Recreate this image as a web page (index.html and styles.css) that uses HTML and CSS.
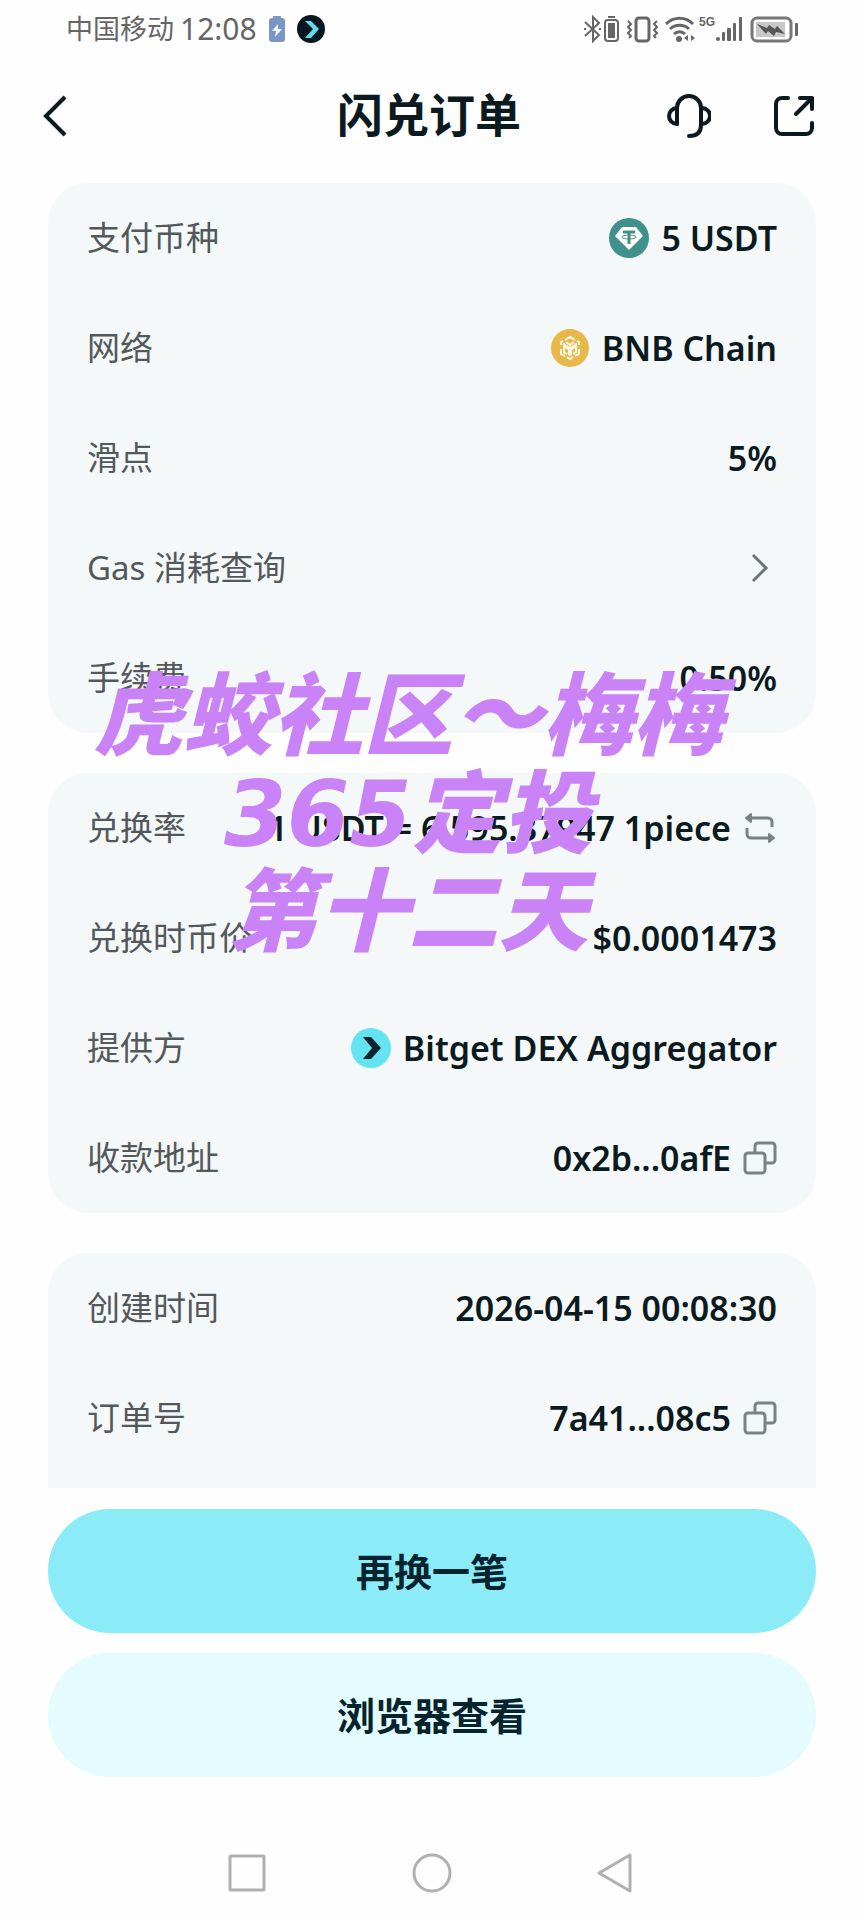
FILE: index.html
```html
<!DOCTYPE html>
<html lang="zh-CN">

<head>
    <meta charset="UTF-8">
    <meta name="viewport" content="width=device-width, initial-scale=1.0">
    <title>闪兑订单</title>
    <link rel="stylesheet" href="styles.css">
</head>

<body>
    <!-- 状态栏 -->
    <div class="status">
        <div class="status-left">
            <span class="carrier">中国移动</span>
            <span class="time">12:08</span>
            <svg class="charge" width="16" height="26" viewBox="0 0 16 26">
                <rect x="4" y="0" width="8" height="3" rx="1" fill="#7b95c4"/>
                <rect x="0" y="2" width="16" height="24" rx="3" fill="#7b95c4"/>
                <path d="M9 8L3 15h4l-1 6 7-8H9z" fill="#fff"/>
            </svg>
            <svg width="28" height="28" viewBox="0 0 28 28">
                <circle cx="14" cy="14" r="14" fill="#07161f"/>
                <path d="M8 6h6l8 8-8 9H8l8-9z" fill="#5fdcee"/>
            </svg>
        </div>
        <div class="status-right">
            <svg width="36" height="28" viewBox="0 0 36 28" fill="none" stroke="#666" stroke-width="2">
                <path d="M1 7l14 13-6 6V2l6 6L1 21M0 14h2M15 14h2"/>
                <rect x="21" y="5" width="13" height="21" rx="3"/>
                <path d="M24 2h7"/>
                <rect x="24" y="8" width="7" height="15" fill="#666" stroke="none"/>
            </svg>
            <svg class="vibrate" width="31" height="28" viewBox="0 0 31 28" fill="none" stroke="#666" stroke-width="3">
                <rect x="9" y="3" width="13" height="23" rx="3"/>
                <path d="M1 6l3 3-3 3 3 3-3 3 3 3-2 2M30 6l-3 3 3 3-3 3 3 3-3 3 2 2" stroke-width="2"/>
            </svg>
            <svg class="wifi" width="31" height="28" viewBox="0 0 31 28" fill="none" stroke="#666" stroke-width="3">
                <path d="M1 9a19 19 0 0 1 27 0M5 14a14 14 0 0 1 19 0M9 19a8 8 0 0 1 11 0"/>
                <circle cx="14" cy="24" r="3" fill="#666" stroke="none"/>
                <path d="M23 20v6l-4-3zM26 20v6l4-3z" fill="#666" stroke="none"/>
            </svg>
            <span class="net">5G</span>
            <svg width="28" height="28" viewBox="0 0 28 28" fill="#666">
                <rect x="1" y="22" width="4" height="4" rx="2"/>
                <rect x="7" y="17" width="3" height="9" rx="1"/>
                <rect x="12" y="13" width="4" height="13" rx="1"/>
                <rect x="18" y="8" width="3" height="18" rx="1"/>
                <rect x="24" y="2" width="3" height="24" rx="1"/>
            </svg>
            <svg class="battery" width="49" height="28" viewBox="0 0 49 28">
                <rect x="2" y="3" width="39" height="23" rx="5" fill="none" stroke="#777" stroke-width="3"/>
                <rect x="6" y="7" width="29" height="15" fill="#c8c8c8"/>
                <path d="M7 9l10 4 2-3 6 4 2-3 8 8-9-2-2 4-6-5-2 3z" fill="#555"/>
                <rect x="45" y="8" width="3" height="13" rx="1" fill="#666"/>
            </svg>
        </div>
    </div>

    <!-- 标题栏 -->
    <header class="header">
        <button class="icon-btn back" aria-label="返回">
            <svg width="24" height="42" viewBox="0 0 24 42" fill="none" stroke="#0b1a1e" stroke-width="4">
                <path d="M22 2L3 21l19 19"/>
            </svg>
        </button>
        <h1>闪兑订单</h1>
        <div class="tools">
            <button class="icon-btn" aria-label="客服">
                <svg width="44" height="44" viewBox="0 0 44 44" fill="none" stroke="#0b1a1e" stroke-width="4" stroke-linecap="round">
                    <path d="M10 30V14a12 12 0 0 1 24 0v17c0 7-4 11-12 11"/>
                    <path d="M10 14a8 8 0 0 0 0 16M35 14a8 8 0 0 1 0 16"/>
                </svg>
            </button>
            <button class="icon-btn" aria-label="分享">
                <svg width="42" height="42" viewBox="0 0 42 42" fill="none" stroke="#0b1a1e" stroke-width="4" stroke-linecap="round" stroke-linejoin="round">
                    <path d="M15 3H9a6 6 0 0 0-6 6v24a6 6 0 0 0 6 6h24a6 6 0 0 0 6-6v-5"/>
                    <path d="M27 3h12v11M39 3L23 19"/>
                </svg>
            </button>
        </div>
    </header>

    <main class="content">
        <section class="card">
            <div class="row">
                <span class="label">支付币种</span>
                <span class="value">
                    <svg width="40" height="40" viewBox="0 0 40 40">
                        <circle cx="20" cy="20" r="20" fill="#40918b"/>
                        <path d="M13 9h14l7 9-14 14L6 18z" fill="#fff"/>
                        <path d="M14 14h12M20 14v12" stroke="#40918b" stroke-width="3"/>
                        <ellipse cx="20" cy="19" rx="7" ry="2" fill="none" stroke="#40918b"/>
                    </svg>
                    5 USDT
                </span>
            </div>
            <div class="row">
                <span class="label">网络</span>
                <span class="value">
                    <svg width="40" height="40" viewBox="0 0 40 40">
                        <circle cx="20" cy="20" r="19" fill="#e8b84b"/>
                        <g fill="none" stroke="#fff8e4" stroke-width="2">
                            <path d="M15 12l5-3 5 3M11 17v-3l2-1M29 17v-3l-2-1M11 21v5l4 2M29 21v5l-4 2M17 29l3 2 3-2"/>
                            <path d="M14 15v9l3 2M26 15v9l-3 2M16 14l4 3 4-3"/>
                        </g>
                        <path d="M15 16l5 3 5-3v4l-3 2v5l-2 1-2-1v-5l-3-2z" fill="#fff8e4"/>
                    </svg>
                    BNB Chain
                </span>
            </div>
            <div class="row">
                <span class="label">滑点</span>
                <span class="value">5%</span>
            </div>
            <a class="row" href="#">
                <span class="label">Gas 消耗查询</span>
                <svg class="arrow" width="18" height="30" viewBox="0 0 18 30" fill="none" stroke="#6b7375" stroke-width="3">
                    <path d="M2 2l13 13L2 28"/>
                </svg>
            </a>
            <div class="row">
                <span class="label">手续费</span>
                <span class="value">0.50%</span>
            </div>
        </section>

        <section class="card">
            <div class="row">
                <span class="label">兑换率</span>
                <span class="value">
                    1 USDT = 6,595.37947 1piece
                    <button class="icon-btn" aria-label="切换">
                        <svg width="34" height="34" viewBox="0 0 34 34" fill="none" stroke="#7b8283" stroke-width="3" stroke-linejoin="round">
                            <path d="M5 7h20a4 4 0 0 1 4 4v5M4 17v6a4 4 0 0 0 4 4h20"/>
                            <path d="M8 3L3 7l5 4zM26 23l5 4-5 4z" fill="#7b8283" stroke-width="2"/>
                        </svg>
                    </button>
                </span>
            </div>
            <div class="row">
                <span class="label">兑换时币价</span>
                <span class="value">$0.0001473</span>
            </div>
            <div class="row">
                <span class="label">提供方</span>
                <span class="value">
                    <svg width="40" height="40" viewBox="0 0 40 40">
                        <circle cx="20" cy="20" r="20" fill="#66e3f0"/>
                        <path d="M12 9h8l10 11-10 11h-8l9-11z" fill="#0b2430"/>
                    </svg>
                    Bitget DEX Aggregator
                </span>
            </div>
            <div class="row">
                <span class="label">收款地址</span>
                <span class="value">
                    0x2b...0afE
                    <button class="icon-btn" aria-label="复制收款地址">
                        <svg width="34" height="34" viewBox="0 0 34 34" fill="none" stroke="#7b8283" stroke-width="3">
                            <rect x="2" y="12" width="20" height="20" rx="3"/>
                            <path d="M12 12V5a3 3 0 0 1 3-3h14a3 3 0 0 1 3 3v14a3 3 0 0 1-3 3h-7"/>
                        </svg>
                    </button>
                </span>
            </div>
        </section>

        <section class="card card-last">
            <div class="row">
                <span class="label">创建时间</span>
                <span class="value">2026-04-15 00:08:30</span>
            </div>
            <div class="row">
                <span class="label">订单号</span>
                <span class="value">
                    7a41...08c5
                    <button class="icon-btn" aria-label="复制订单号">
                        <svg width="34" height="34" viewBox="0 0 34 34" fill="none" stroke="#7b8283" stroke-width="3">
                            <rect x="2" y="12" width="20" height="20" rx="3"/>
                            <path d="M12 12V5a3 3 0 0 1 3-3h14a3 3 0 0 1 3 3v14a3 3 0 0 1-3 3h-7"/>
                        </svg>
                    </button>
                </span>
            </div>
        </section>

        <!-- 水印 -->
        <div class="watermark">虎蛟社区～梅梅<br>365定投<br>第十二天</div>
    </main>

    <div class="actions">
        <button class="btn btn-primary">再换一笔</button>
        <button class="btn btn-light">浏览器查看</button>
    </div>

    <!-- 系统导航 -->
    <nav class="sysnav">
        <button class="icon-btn" aria-label="最近任务">
            <svg width="42" height="42" viewBox="0 0 42 42" fill="none" stroke="#b0b0b0" stroke-width="3">
                <rect x="4" y="4" width="34" height="34" rx="1"/>
            </svg>
        </button>
        <button class="icon-btn" aria-label="主页">
            <svg width="42" height="42" viewBox="0 0 42 42" fill="none" stroke="#b0b0b0" stroke-width="3">
                <circle cx="21" cy="21" r="18"/>
            </svg>
        </button>
        <button class="icon-btn" aria-label="返回上一级">
            <svg width="42" height="42" viewBox="0 0 42 42" fill="none" stroke="#b0b0b0" stroke-width="3" stroke-linejoin="round">
                <path d="M34 3v36L3 21z"/>
            </svg>
        </button>
    </nav>
</body>

</html>
```

FILE: styles.css
```css
* {
    margin: 0;
    padding: 0;
    box-sizing: border-box;
}

body {
    background-color: #fefefe;
    color: #0b1a1e;
    font-family: "Noto Sans", "Noto Sans CJK SC", sans-serif;
}

a {
    text-decoration: none;
    color: inherit;
}

svg {
    display: block;
    flex: none;
}

.icon-btn {
    border: none;
    background: none;
    cursor: pointer;
}

/* 状态栏 */
.status {
    display: flex;
    justify-content: space-between;
    height: 58px;
    padding: 0 65px 0 66px;
    color: #666;
}

.status-left,
.status-right {
    display: flex;
    align-items: center;
}

.carrier {
    font-size: 27px;
    line-height: 40px;
}

.time {
    margin-left: 6px;
    font-size: 30px;
    line-height: 40px;
}

.charge {
    margin: 0 12px;
}

.vibrate,
.wifi {
    margin-left: 7px;
}

.net {
    align-self: flex-start;
    margin: 14px 0 0 3px;
    font-family: "Liberation Sans", sans-serif;
    font-size: 12px;
    font-weight: bold;
    line-height: 16px;
}

.battery {
    margin-left: 7px;
}

/* 标题栏 */
.header {
    display: grid;
    grid-template-columns: 1fr auto 1fr;
    align-items: center;
    height: 116px;
    padding: 0 49px 0 43px;
}

.header h1 {
    padding-bottom: 4px;
    font-size: 46px;
    font-weight: 600;
    line-height: 60px;
}

.back {
    justify-self: start;
}

.tools {
    display: flex;
    justify-self: end;
    align-items: center;
    gap: 62px;
}

/* 订单信息 */
.content {
    position: relative;
    padding: 9px 48px 0;
}

.card {
    margin-bottom: 40px;
    padding: 0 39px;
    border-radius: 40px;
    background-color: #f4f8f9;
}

.card-last {
    margin-bottom: 0;
    padding-bottom: 15px;
    border-radius: 40px 40px 0 0;
}

.row {
    display: flex;
    justify-content: space-between;
    align-items: center;
    height: 110px;
}

.label {
    color: #53595b;
    font-size: 33px;
    line-height: 40px;
}

.value {
    display: flex;
    align-items: center;
    gap: 12px;
    font-size: 34px;
    font-weight: 600;
    line-height: 40px;
    white-space: nowrap;
}

.arrow {
    margin-right: 8px;
}

.watermark {
    position: absolute;
    top: 494px;
    left: 0;
    right: 48px;
    color: #c983f7;
    font-family: "DejaVu Sans", "Noto Sans CJK SC", sans-serif;
    font-size: 90px;
    font-style: italic;
    font-weight: 900;
    line-height: 98px;
    text-align: center;
    white-space: nowrap;
    pointer-events: none;
}

/* 底部按钮 */
.actions {
    display: flex;
    flex-direction: column;
    gap: 20px;
    padding: 21px 48px 0;
}

.btn {
    height: 124px;
    padding-bottom: 4px;
    border: none;
    border-radius: 62px;
    color: #06232e;
    font-family: inherit;
    font-size: 38px;
    font-weight: 600;
    cursor: pointer;
}

.btn-primary {
    background-color: #8becf8;
}

.btn-light {
    background-color: #e4fcfe;
}

/* 系统导航 */
.sysnav {
    display: flex;
    justify-content: center;
    gap: 143px;
    padding: 75px 0 26px;
}
```
